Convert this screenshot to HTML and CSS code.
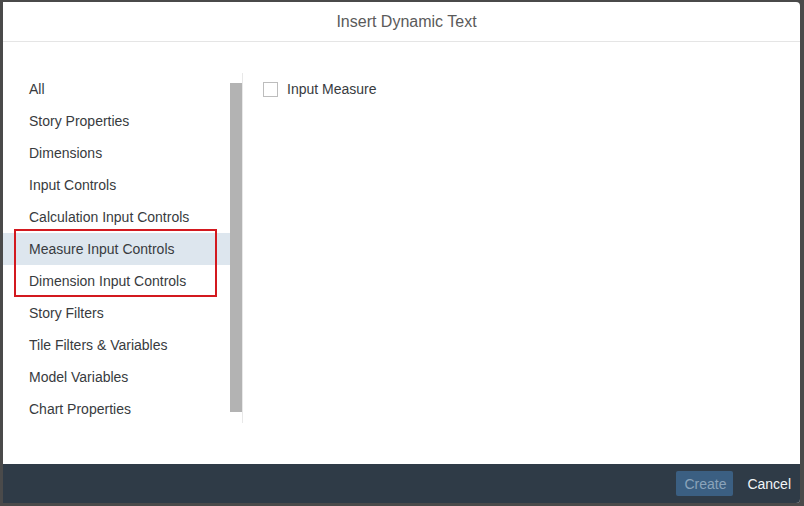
FILE: index.html
```html
<!DOCTYPE html>
<html>
<head>
<meta charset="utf-8">
<link rel="stylesheet" href="styles.css">
</head>
<body>
<div class="dialog">
  <div class="header">Insert Dynamic Text</div>
  <div class="content">
    <div class="left">
      <ul class="list">
        <li>All</li>
        <li>Story Properties</li>
        <li>Dimensions</li>
        <li>Input Controls</li>
        <li>Calculation Input Controls</li>
        <li class="selected">Measure Input Controls</li>
        <li>Dimension Input Controls</li>
        <li>Story Filters</li>
        <li>Tile Filters &amp; Variables</li>
        <li>Model Variables</li>
        <li>Chart Properties</li>
      </ul>
      <div class="scrollbar"><div class="thumb"></div></div>
      <div class="annotation"></div>
    </div>
    <div class="divider"></div>
    <div class="right">
      <label class="check-row"><span class="checkbox"></span><span>Input Measure</span></label>
    </div>
  </div>
  <div class="footer">
    <button class="btn-create" disabled>Create</button>
    <button class="btn-cancel">Cancel</button>
  </div>
</div>
</body>
</html>
```

FILE: styles.css
```css
html, body {
  margin: 0;
  padding: 0;
}
body {
  background: #4a4a4a;
  width: 804px;
  height: 506px;
  box-sizing: border-box;
  padding: 2px 4px 3px 3px;
  font-family: "Liberation Sans", Arial, sans-serif;
  overflow: hidden;
}
.dialog {
  width: 797px;
  height: 501px;
  background: #fff;
  border-radius: 0 4px 4px 0;
  display: flex;
  flex-direction: column;
  overflow: hidden;
}
.header {
  height: 39px;
  line-height: 39px;
  border-bottom: 1px solid #e5e5e5;
  text-align: center;
  font-size: 16px;
  color: #5a5a5a;
  padding-left: 10px;
}
.content {
  flex: 1;
  display: flex;
  padding-top: 31px;
}
.left {
  position: relative;
  display: flex;
  height: 352px;
}
.list {
  list-style: none;
  margin: 0;
  padding: 0;
  width: 227px;
}
.list li {
  height: 32px;
  line-height: 32px;
  padding-left: 26px;
  font-size: 14px;
  color: #383b3e;
}
.list li.selected {
  background: #dde6ee;
}
.scrollbar {
  width: 12px;
  padding-top: 10px;
}
.thumb {
  height: 329px;
  background: #b3b3b3;
}
.annotation {
  position: absolute;
  left: 11px;
  top: 156px;
  width: 199px;
  height: 64px;
  border: 2px solid #d3191f;
}
.divider {
  width: 1px;
  height: 350px;
  background: #e8e8e8;
}
.right {
  padding-left: 20px;
  padding-top: 8px;
}
.check-row {
  display: flex;
  align-items: center;
  gap: 9px;
  font-size: 14px;
  color: #383b3e;
}
.checkbox {
  width: 13px;
  height: 13px;
  border: 1px solid #bdbdbd;
  background: #fff;
}
.footer {
  height: 39px;
  background: #2f3b47;
  display: flex;
  align-items: center;
  justify-content: flex-end;
  padding-right: 9px;
  gap: 6px;
}
.footer button {
  font-family: "Liberation Sans", Arial, sans-serif;
  font-size: 14px;
  border: none;
  border-radius: 2px;
  height: 25px;
  padding: 0 8px;
}
.btn-create {
  background: #3b5f82;
  color: #8ba4bb;
  width: 57px;
}
.footer .btn-cancel {
  background: transparent;
  color: #f2f5f8;
  padding-right: 0;
}
```
